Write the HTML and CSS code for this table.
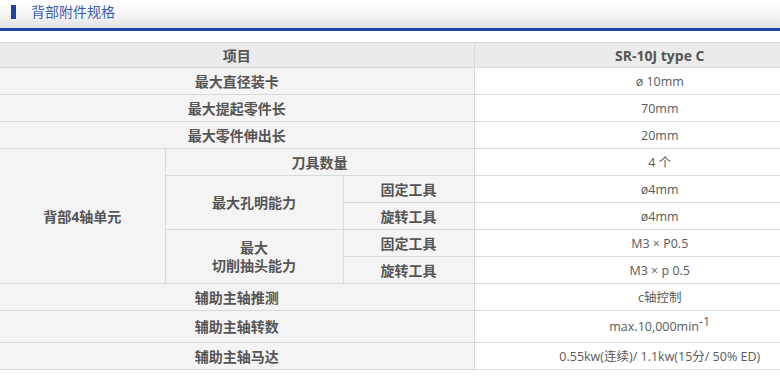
FILE: index.html
```html
<!DOCTYPE html>
<html lang="zh">
<head>
<meta charset="utf-8">
<title>背部附件规格</title>
<link rel="stylesheet" href="styles.css">
</head>
<body>
<div class="page">
  <div class="titlebar">
    <span class="marker"></span>
    <h2 class="title">背部附件规格</h2>
  </div>
  <div class="wrap">
    <table class="spec">
      <colgroup>
        <col class="c1"><col class="c2"><col class="c3"><col class="c4">
      </colgroup>
      <tr class="head">
        <th colspan="3">项目</th>
        <th class="model">SR-10J type C</th>
      </tr>
      <tr>
        <th colspan="3">最大直径装卡</th>
        <td>ø 10mm</td>
      </tr>
      <tr>
        <th colspan="3">最大提起零件长</th>
        <td>70mm</td>
      </tr>
      <tr>
        <th colspan="3">最大零件伸出长</th>
        <td>20mm</td>
      </tr>
      <tr>
        <th rowspan="5">背部4轴单元</th>
        <th colspan="2">刀具数量</th>
        <td>4 个</td>
      </tr>
      <tr>
        <th rowspan="2">最大孔明能力</th>
        <th>固定工具</th>
        <td>ø4mm</td>
      </tr>
      <tr>
        <th>旋转工具</th>
        <td>ø4mm</td>
      </tr>
      <tr>
        <th rowspan="2" class="two">最大<br>切削抽头能力</th>
        <th>固定工具</th>
        <td>M3 × P0.5</td>
      </tr>
      <tr>
        <th>旋转工具</th>
        <td>M3 × p 0.5</td>
      </tr>
      <tr>
        <th colspan="3">辅助主轴推测</th>
        <td>c轴控制</td>
      </tr>
      <tr class="tall">
        <th colspan="3">辅助主轴转数</th>
        <td>max.10,000min<sup>-1</sup></td>
      </tr>
      <tr>
        <th colspan="3">辅助主轴马达</th>
        <td>0.55kw(连续)/ 1.1kw(15分/ 50% ED)</td>
      </tr>
    </table>
  </div>
</div>
</body>
</html>
```
FILE: styles.css
```css
html, body {
  margin: 0;
  padding: 0;
  background: #ffffff;
}
body {
  font-family: "Open Sans", "Noto Sans CJK SC", sans-serif;
  color: #555555;
}
.page {
  width: 780px;
  overflow: hidden;
}
.titlebar {
  height: 28px;
  border-bottom: 3px solid #1b47a2;
  background: linear-gradient(#ffffff 0%, #f7f7f7 45%, #e3e3e3 100%);
  display: flex;
  align-items: center;
  padding-left: 11px;
}
.marker {
  width: 5px;
  height: 14px;
  background: #1c44a4;
  margin-top: -4px;
}
.title {
  margin: 0 0 0 15px;
  font-size: 14px;
  font-weight: normal;
  color: #3b5ea8;
  line-height: 20px;
  margin-top: -4px;
}
.wrap {
  margin-top: 11px;
}
.spec {
  width: 845px;
  table-layout: fixed;
  border-collapse: collapse;
  font-size: 14px;
}
.c1 { width: 165px; }
.c2 { width: 178px; }
.c3 { width: 131px; }
.c4 { width: 371px; }
.spec th, .spec td {
  border: 1px solid #d9d9d9;
  height: 26px;
  padding: 0;
  text-align: center;
  vertical-align: middle;
  line-height: 17px;
}
.spec tr > :first-child {
  border-left: none;
}
.spec tr > :last-child {
  border-right: none;
}
.spec th {
  background: #f4f4f4;
  color: #555555;
  font-weight: bold;
}
.spec .two {
  line-height: 18px;
}
.spec td {
  background: #ffffff;
  color: #5a5a5a;
  font-size: 12.5px;
}
.spec .head th {
  background: #ebebeb;
  height: 24px;
}
.spec .head .model {
  font-size: 14px;
}
.spec .tall th, .spec .tall td {
  height: 31px;
}
.spec sup {
  font-size: 12.5px;
  line-height: 0;
}
```
